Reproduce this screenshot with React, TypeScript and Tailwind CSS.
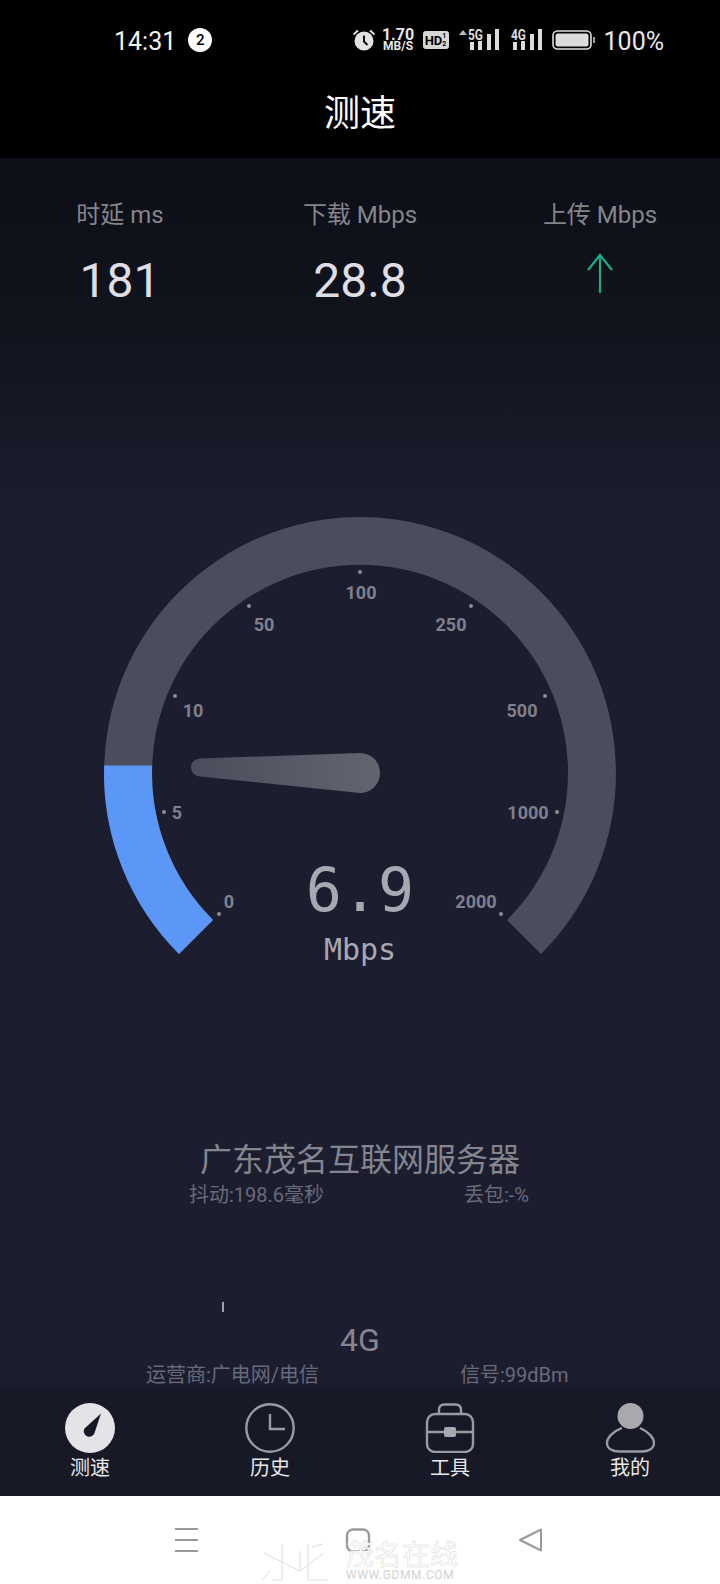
const font = "font-['Roboto','Noto_Sans_CJK_SC',sans-serif]";

// gauge tick dots and their labels
const ticks = [
  { label: "0", dx: 219, dy: 914, tx: 229, ty: 902 },
  { label: "5", dx: 164, dy: 812, tx: 177, ty: 813 },
  { label: "10", dx: 175, dy: 696, tx: 193, ty: 711 },
  { label: "50", dx: 249, dy: 606, tx: 264, ty: 625 },
  { label: "100", dx: 360, dy: 572, tx: 361, ty: 593 },
  { label: "250", dx: 471, dy: 606, tx: 451, ty: 625 },
  { label: "500", dx: 545, dy: 696, tx: 522, ty: 711 },
  { label: "1000", dx: 557, dy: 812, tx: 528, ty: 813 },
  { label: "2000", dx: 501, dy: 914, tx: 476, ty: 902 },
];

function Signal({ label }: { label: string }) {
  return (
    <svg width="31" height="26" viewBox="0 0 31 26" className="block">
      <text x="0" y="13" fontSize="14" fontWeight="700" fill="#dcdcdc" fontFamily="Roboto, sans-serif" textLength="15" lengthAdjust="spacingAndGlyphs">
        {label}
      </text>
      <rect x="2" y="15" width="4" height="8" fill="#dcdcdc" />
      <rect x="10" y="14" width="4" height="9" fill="#dcdcdc" />
      <rect x="19" y="7" width="4" height="16" fill="#dcdcdc" />
      <rect x="27" y="2" width="4" height="21" fill="#dcdcdc" />
    </svg>
  );
}

function StatusBar() {
  return (
    <div className="flex h-[80px] items-center pl-[114px] pr-[56px] text-[#f2f2f2]">
      <span className="mt-[4px] text-[25px] leading-[30px]">14:31</span>
      <span className="ml-[12px] flex h-[24px] w-[24px] items-center justify-center rounded-full bg-white text-[15px] font-medium text-black">2</span>
      <div className="ml-auto flex items-center">
        <svg width="24" height="24" viewBox="0 0 24 24" className="block">
          <circle cx="12" cy="13" r="9.5" fill="#e2e2e2" />
          <path d="M12 7.5V13.5L15.5 17" stroke="#111" strokeWidth="2" fill="none" />
          <path d="M1.5 6.5L6 2.5M22.5 6.5L18 2.5" stroke="#e2e2e2" strokeWidth="2" fill="none" />
        </svg>
        <div className="ml-[7px] flex w-[31px] flex-col items-center font-bold text-[#e6e6e6]">
          <span className="text-[16px] leading-[13px]">1.70</span>
          <span className="text-[12px] leading-[11px]">MB/S</span>
        </div>
        <div className="ml-[9px] flex h-[18px] w-[26px] items-center justify-center rounded-[3px] bg-[#d6d6d6] text-[13px] leading-none font-bold text-black">
          HD<span className="flex flex-col text-[7px] leading-[8px]"><span>1</span><span>2</span></span>
        </div>
        <div className="relative ml-[19px]">
          <span className="absolute top-[3px] left-[-9px] h-0 w-0 border-x-[4px] border-b-[5px] border-x-transparent border-b-[#bbbbbb]" />
          <Signal label="5G" />
        </div>
        <div className="ml-[12px]">
          <Signal label="4G" />
        </div>
        <svg width="44" height="20" viewBox="0 0 44 20" className="ml-[10px] block">
          <rect x="1" y="1" width="38" height="18" rx="4.5" stroke="#e0e0e0" strokeWidth="1.6" fill="none" />
          <rect x="3.5" y="3.5" width="33" height="13" rx="2.5" fill="#dcdcdc" />
          <rect x="41" y="7" width="2" height="6" fill="#9a9a9a" />
        </svg>
        <span className="mt-[4px] ml-[8px] text-[25px] leading-[30px] text-[#e8e8e8]">100%</span>
      </div>
    </div>
  );
}

function Stats() {
  return (
    <div className="grid grid-cols-3 pt-[41px] text-center">
      <div>
        <div className="text-[24px] leading-[32px] text-[#85858c]">时延 ms</div>
        <div className="mt-[22px] text-[48px] leading-[56px] text-[#dedee4]">181</div>
      </div>
      <div>
        <div className="text-[24px] leading-[32px] text-[#85858c]">下载 Mbps</div>
        <div className="mt-[22px] text-[48px] leading-[56px] text-[#dedee4]">28.8</div>
      </div>
      <div>
        <div className="text-[24px] leading-[32px] text-[#85858c]">上传 Mbps</div>
        <div className="mt-[22px] flex h-[56px] justify-center">
          <svg width="30" height="42" viewBox="0 0 30 42" className="block">
            <path d="M15 1V40M3 17L15 2L27 17" stroke="#18ad86" strokeWidth="2.2" fill="none" />
          </svg>
        </div>
      </div>
    </div>
  );
}

function Gauge() {
  return (
    <svg width="720" height="470" viewBox="0 510 720 470" className="mt-[201px] block">
      <defs>
        <linearGradient id="needle" x1="0" x2="1" y1="0" y2="0">
          <stop offset="0" stopColor="#4b4d5c" />
          <stop offset="1" stopColor="#62646f" />
        </linearGradient>
      </defs>
      <path d="M179 954A256 256 0 1 1 541 954L507 920A208 208 0 1 0 213 920Z" fill="#4b4d5d" />
      <path d="M179 954A256 256 0 0 1 104.1 765.5L152.1 765.5A208 208 0 0 0 213 920Z" fill="#5b97f6" />
      {ticks.map((t) => (
        <g key={t.label}>
          <circle cx={t.dx} cy={t.dy} r="2" fill="#8b8c97" />
          <text x={t.tx} y={t.ty + 6} textAnchor="middle" fontSize="18" fontWeight="700" fill="#7f808c" fontFamily="Roboto, sans-serif">
            {t.label}
          </text>
        </g>
      ))}
      <path d="M360 753A20 20 0 0 1 360 793L200 776.5A9 9 0 0 1 200 758.5Z" fill="url(#needle)" />
      <text x="360" y="911" textAnchor="middle" fontSize="60" fill="#a8a8b2" fontFamily="'DejaVu Sans Mono', monospace">6.9</text>
      <text x="360" y="960" textAnchor="middle" fontSize="30" fill="#a8a8b2" fontFamily="'DejaVu Sans Mono', monospace">Mbps</text>
    </svg>
  );
}

function Info() {
  return (
    <div className="text-[#696a78]">
      <div className="mt-[160px] text-center text-[32px] leading-[40px] text-[#85858f]">广东茂名互联网服务器</div>
      <div className="mt-[2px] flex pl-[189px] text-[20px] leading-[26px]">
        <span className="w-[275px]">抖动:198.6毫秒</span>
        <span>丢包:-%</span>
      </div>
      <div className="mt-[94px] ml-[222px] h-[10px] w-[2px] bg-[#a0a0a8]" />
      <div className="mt-[8px] text-center text-[32px] leading-[40px] text-[#85858f]">4G</div>
      <div className="mt-[2px] flex pl-[146px] text-[20px] leading-[26px]">
        <span className="w-[314px]">运营商:广电网/电信</span>
        <span>信号:99dBm</span>
      </div>
    </div>
  );
}

function TabBar() {
  const stroke = "#9a9aa2";
  return (
    <div className="grid h-[109px] grid-cols-4 bg-[#181926] pt-[16px] text-center text-[20px] leading-[26px] text-[#e8e8ea]">
      <div className="flex flex-col items-center">
        <svg width="50" height="50" viewBox="0 0 50 50" className="block">
          <circle cx="25" cy="25" r="25" fill="#e4e4e8" />
          <path d="M36 10.5L29.5 30A5.5 5.5 0 1 1 19.5 25.5Z" fill="#181926" />
        </svg>
        <span className="mt-[2px]">测速</span>
      </div>
      <div className="flex flex-col items-center">
        <svg width="50" height="50" viewBox="0 0 50 50" className="block">
          <circle cx="25" cy="25" r="23.7" stroke={stroke} strokeWidth="2.4" fill="none" />
          <path d="M25 11V26H40" stroke={stroke} strokeWidth="2.4" fill="none" />
        </svg>
        <span className="mt-[2px]">历史</span>
      </div>
      <div className="flex flex-col items-center">
        <svg width="50" height="50" viewBox="0 0 50 50" className="block">
          <rect x="2" y="11" width="46" height="38" rx="8" stroke={stroke} strokeWidth="2.4" fill="none" />
          <path d="M14 11V7Q14 1.5 19.5 1.5H30.5Q36 1.5 36 7V11" stroke={stroke} strokeWidth="2.4" fill="none" />
          <path d="M2 29H48" stroke={stroke} strokeWidth="2.4" fill="none" />
          <rect x="19" y="24" width="12" height="10" rx="2" fill="#a8a8ae" />
        </svg>
        <span className="mt-[2px]">工具</span>
      </div>
      <div className="flex flex-col items-center">
        <svg width="50" height="50" viewBox="0 0 50 50" className="block">
          <circle cx="25.5" cy="13" r="13" fill="#a8a8ae" />
          <path d="M17 25C7 29 2 35 2 40C2 46 8 48.5 14 48.5H37C43 48.5 49 46 49 40C49 35 44 29 35 25" stroke={stroke} strokeWidth="2.4" fill="none" />
        </svg>
        <span className="mt-[2px]">我的</span>
      </div>
    </div>
  );
}

function NavBar() {
  return (
    <div className="relative flex h-[88px] items-start justify-center bg-white pt-[32px]">
      <svg width="24" height="24" viewBox="0 0 24 24" className="block">
        <path d="M0 1H23M0 12H23M0 23H23" stroke="#999" strokeWidth="2" fill="none" />
      </svg>
      <svg width="26" height="26" viewBox="0 0 26 26" className="ml-[146px] block">
        <rect x="2" y="1.5" width="22" height="22" rx="6" stroke="#999" strokeWidth="2.4" fill="none" />
      </svg>
      <svg width="26" height="26" viewBox="0 0 26 26" className="ml-[148px] block">
        <path d="M22 1.5V22.5L1 12Z" stroke="#999" strokeWidth="2" strokeLinejoin="round" fill="none" />
      </svg>
      {/* site watermark sits over the nav bar */}
      <div className="absolute top-[47px] left-[262px] flex">
        <svg width="68" height="38" viewBox="0 0 68 38" className="block">
          <path d="M20 1V37M2 10L38 28L62 10M38 28V8M46 1V37M50 4L60 1M0 37L8 28M20 37H10M46 37H66" stroke="#dedede" strokeWidth="1" fill="none" />
        </svg>
        <div className="ml-[16px] flex flex-col">
          <span className="text-[28px] leading-[26px] whitespace-nowrap text-white [-webkit-text-stroke:0.5px_#d8d8d8]">茂名在线</span>
          <span className="mt-[1px] text-[12px] leading-[10px] tracking-[0.6px] whitespace-nowrap text-[#d2d2d2]">WWW.GDMM.COM</span>
        </div>
      </div>
    </div>
  );
}

export default function App() {
  return (
    <div className={`flex h-[1584px] w-[720px] flex-col overflow-hidden bg-black ${font}`}>
      <StatusBar />
      <div className="mt-[3px] flex h-[62px] items-center justify-center text-[36px] leading-[44px] text-white">测速</div>
      <div className="h-[13px]" />
      <div className="h-[1229px] overflow-hidden bg-[linear-gradient(180deg,#0c0e18_0px,#11141d_170px,#1c1e30_370px,#1c1e30_100%)]">
        <Stats />
        <Gauge />
        <Info />
      </div>
      <TabBar />
      <NavBar />
    </div>
  );
}
